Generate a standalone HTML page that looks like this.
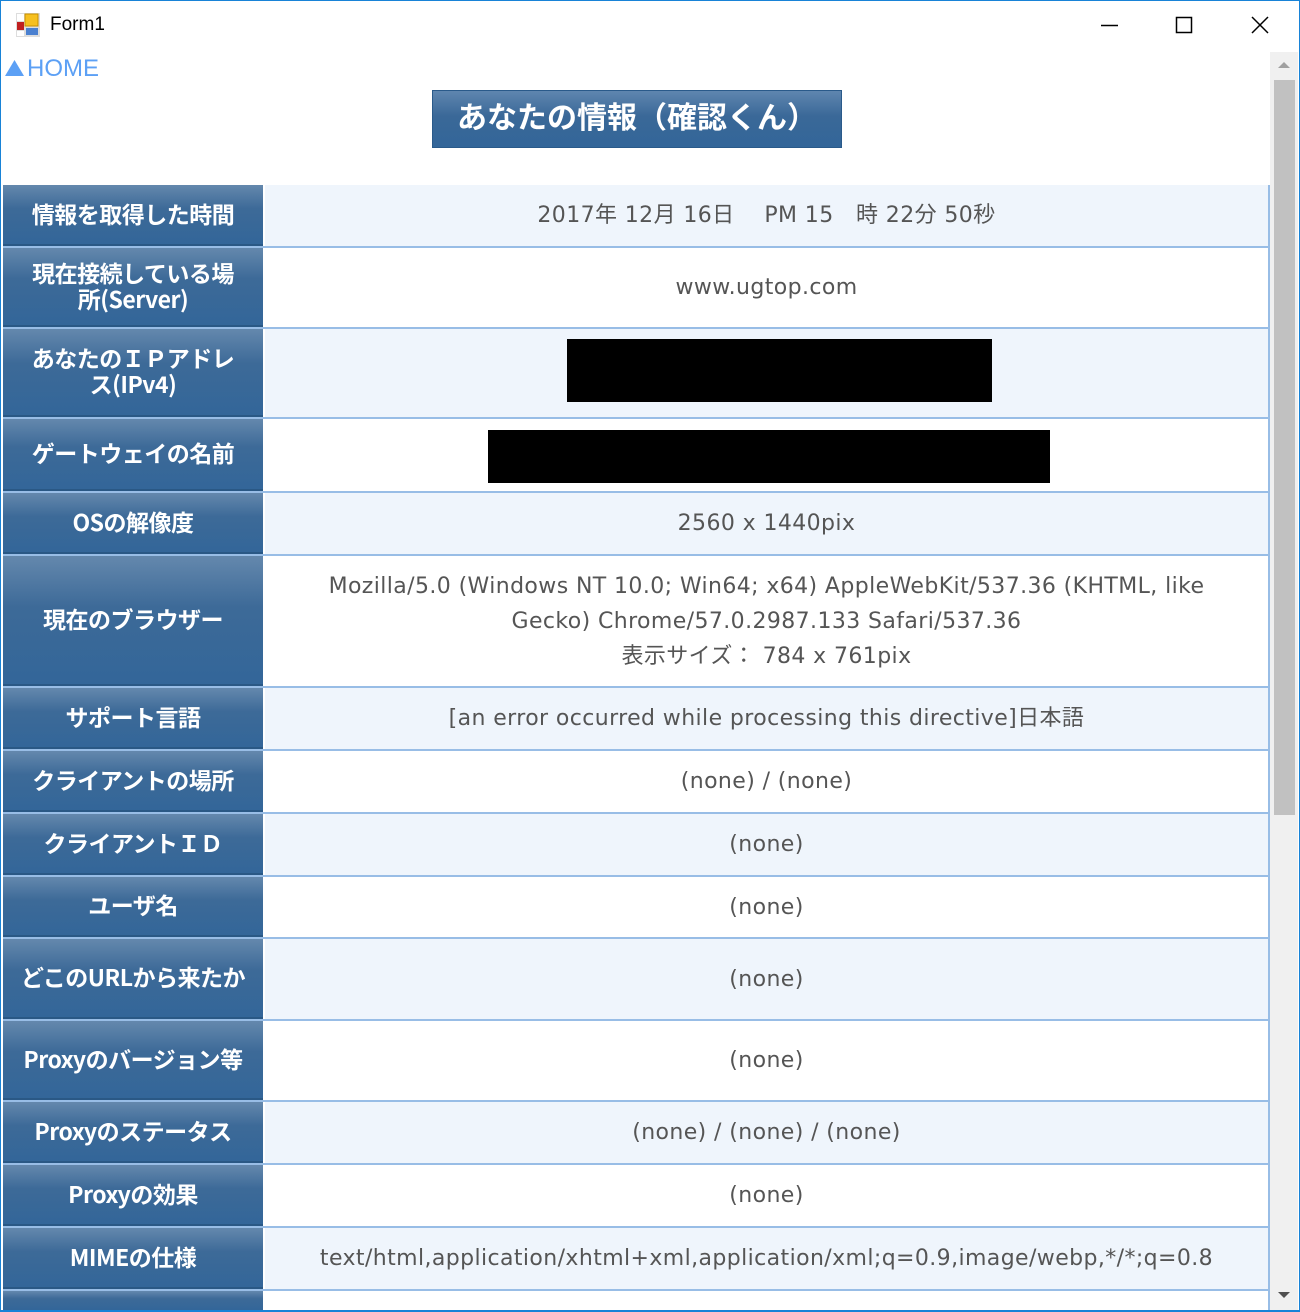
<!DOCTYPE html>
<html><head><meta charset="utf-8"><style>
*{margin:0;padding:0;box-sizing:border-box}
html,body{width:1300px;height:1312px;overflow:hidden}
body{background:#fff;position:relative;font-family:"DejaVu Sans","Noto Sans CJK JP",sans-serif}
.win{position:absolute;left:0;top:0;width:1300px;height:1312px;border:1px solid #1883d7;border-bottom:2px solid #1883d7;z-index:5;pointer-events:none}
.title{position:absolute;left:50px;top:14px;font:19px "Liberation Sans","Noto Sans CJK JP",sans-serif;color:#000}
.home{position:absolute;left:27px;top:55px;font:24px "Liberation Sans",sans-serif;color:#5ca0f5}
.btn{position:absolute;left:432px;top:90px;width:410px;height:58px;background:linear-gradient(#5f86af,#3a6898 45%,#336699);border:1px solid #2a5a8a;color:#fff;font:bold 30px "Noto Sans CJK JP",sans-serif;text-align:center;line-height:48px}
.row{position:absolute;left:3px;width:1267px;border-bottom:2px solid #98bde6;overflow:hidden}
.h{position:absolute;left:0;top:0;bottom:0;width:260px;background:linear-gradient(#6488ad,#3d6a98 40%,#336699);border-bottom:2px solid #2a5885;color:#fff;font:bold 23px "Noto Sans CJK JP",sans-serif;display:flex;align-items:center;justify-content:center;text-align:center;line-height:26px;padding:0 18px 4px;letter-spacing:-0.5px}
.v{position:absolute;left:262px;right:0;top:0;bottom:0;display:flex;align-items:center;justify-content:center;text-align:center;color:#555;font-size:22px;letter-spacing:0.4px;line-height:35px;border-right:2px solid #98bde6;padding:0 40px}
.alt .v{background:#eff5fc}
.blk{background:#000}
.sb{position:absolute;left:1270px;top:52px;width:28px;height:1258px;background:#f0f0f0}
.th{position:absolute;left:1274px;top:80px;width:21px;height:735px;background:#c1c1c1}
</style></head><body>
<div class="win"></div>
<svg style="position:absolute;left:16px;top:13px" width="24" height="24" viewBox="0 0 24 24"><rect x="0" y="0" width="24" height="24" fill="#ddd"/><rect x="1" y="1" width="7" height="7" fill="#fff"/><rect x="9" y="1" width="13" height="12" fill="#f6c020" stroke="#c89000"/><rect x="1" y="9" width="7" height="8" fill="#c02020"/><rect x="10" y="15" width="12" height="7" fill="#4a80d0"/><rect x="1" y="18" width="7" height="5" fill="#fff"/></svg>
<div class="title">Form1</div>
<svg style="position:absolute;left:1100px;top:16px" width="180" height="20"><line x1="1" y1="9.5" x2="18" y2="9.5" stroke="#000" stroke-width="1.5"/><rect x="76.5" y="1.5" width="15" height="15" fill="none" stroke="#000" stroke-width="1.5"/><path d="M152 1L168 17M168 1L152 17" stroke="#000" stroke-width="1.5"/></svg>
<svg style="position:absolute;left:5px;top:60px" width="20" height="17"><path d="M0 16L9.5 0L19 16Z" fill="#5ca0f5"/></svg>
<div class="home">HOME</div>
<div class="btn">あなたの情報（確認くん）</div>
<div class="sb"></div><div class="th"></div>
<svg style="position:absolute;left:1277px;top:60px" width="14" height="10"><path d="M1 8L7 2L13 8Z" fill="#a0a0a0"/></svg>
<svg style="position:absolute;left:1277px;top:1290px" width="14" height="10"><path d="M1 2L7 8L13 2Z" fill="#505050"/></svg>

<div class="row alt" style="top:185px;height:63px"><div class="h">情報を取得した時間</div><div class="v">2017年 12月 16日　 PM 15　時 22分 50秒</div></div>
<div class="row" style="top:248px;height:81px"><div class="h">現在接続している場所(Server)</div><div class="v">www.ugtop.com</div></div>
<div class="row alt" style="top:329px;height:90px"><div class="h">あなたのＩＰアドレス(IPv4)</div><div class="v"><div class="blk" style="position:absolute;left:302px;top:10px;width:425px;height:63px"></div></div></div>
<div class="row" style="top:419px;height:74px"><div class="h">ゲートウェイの名前</div><div class="v"><div class="blk" style="position:absolute;left:223px;top:11px;width:562px;height:53px"></div></div></div>
<div class="row alt" style="top:493px;height:63px"><div class="h">OSの解像度</div><div class="v">2560 x 1440pix</div></div>
<div class="row" style="top:556px;height:132px"><div class="h">現在のブラウザー</div><div class="v"><div>Mozilla/5.0 (Windows NT 10.0; Win64; x64) AppleWebKit/537.36 (KHTML, like<br>Gecko) Chrome/57.0.2987.133 Safari/537.36<br>表示サイズ： 784 x 761pix</div></div></div>
<div class="row alt" style="top:688px;height:63px"><div class="h">サポート言語</div><div class="v">[an error occurred while processing this directive]日本語</div></div>
<div class="row" style="top:751px;height:63px"><div class="h">クライアントの場所</div><div class="v">(none) / (none)</div></div>
<div class="row alt" style="top:814px;height:63px"><div class="h">クライアントＩＤ</div><div class="v">(none)</div></div>
<div class="row" style="top:877px;height:62px"><div class="h">ユーザ名</div><div class="v">(none)</div></div>
<div class="row alt" style="top:939px;height:82px"><div class="h">どこのURLから来たか</div><div class="v">(none)</div></div>
<div class="row" style="top:1021px;height:81px"><div class="h">Proxyのバージョン等</div><div class="v">(none)</div></div>
<div class="row alt" style="top:1102px;height:63px"><div class="h">Proxyのステータス</div><div class="v">(none) / (none) / (none)</div></div>
<div class="row" style="top:1165px;height:63px"><div class="h">Proxyの効果</div><div class="v">(none)</div></div>
<div class="row alt" style="top:1228px;height:63px"><div class="h">MIMEの仕様</div><div class="v" style="padding:0">text/html,application/xhtml+xml,application/xml;q=0.9,image/webp,*/*;q=0.8</div></div>
<div class="row" style="top:1291px;height:19px;border-bottom:none"><div class="h" style="border-bottom:none"></div><div class="v"></div></div>
</body></html>
